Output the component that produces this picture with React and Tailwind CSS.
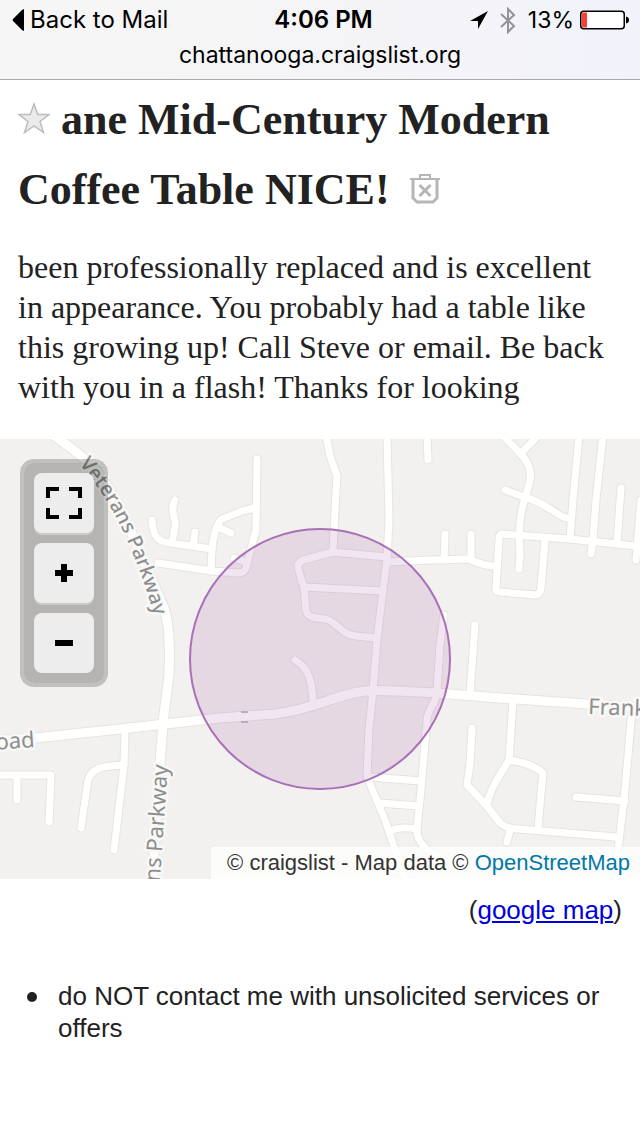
const majorRoads = [
  "M53 435 C75 450 95 465 110 490 C130 525 150 575 163 606 C170 622 170 650 169 675 L163 723 L160 765 L152 885",
  "M-5 741 L35 738 L120 729 L165 724 L220 718 L275 714 C312 709 325 700 350 694 C366 689 380 690 437 693 L500 698 L645 708",
];

const minorRoads = [
  "M152 520 C153 537 158 542 170 543 L212 549",
  "M175 500 C169 511 177 520 175 527 L172 542",
  "M195 532 L193 546",
  "M158 563 L212 571 L238 573 C244 573 246 570 247 564 L250 552 L256 530 L257 459",
  "M234 558 L246 562",
  "M255 508 C245 509 234 514 222 519 C216 523 213 540 212 549 L211 571",
  "M220 528 L231 533",
  "M326 435 L330 456 L337 476 L335 510 L333 552",
  "M387 435 L389 520 L387 560 L383 590 L377 640 L373 690 L369 730 L367 775 L370 784 L385 820 L407 885",
  "M427 435 L428 460",
  "M387 557 L333 552 L303 560 Q297 563 298 568 L304 588 L306 610 C307 617 313 618 326 619 C338 623 342 635 356 636 L376 638",
  "M304 587 L383 591",
  "M387 562 L430 560 L468 559 C477 562 482 566 495 566",
  "M295 660 C309 668 312 681 313 702",
  "M444 615 L440 645 L437 690 C437 705 428 706 427 720 L421 790 L417 829 C416 840 426 851 437 855",
  "M370 777 L421 781",
  "M379 803 L419 806",
  "M391 831 Q399 826 417 829",
  "M502 435 L520 453 C535 469 531 479 526 495 C520 512 520 524 519 538 L520 552 L519 569",
  "M537 437 L520 454",
  "M505 490 L524 497 C547 503 558 517 567 518 L571 518",
  "M579 435 L573 500 L570 538",
  "M603 435 L596 500 L593 540 L591 554",
  "M621 488 L617 543",
  "M641 500 L636 560",
  "M645 547 L570 539 L502 534 Q499 534 499 540 L496 588 Q496 592 500 592 L535 595 Q540 595 541 588 L545 540",
  "M445 534 L444 560",
  "M471 534 L471 559",
  "M475 625 L470 694",
  "M513 699 L509 760 C501 774 489 789 487 806",
  "M509 760 C521 762 532 764 543 773 L541 793 L538 830",
  "M472 728 L470 764 L467 785 L487 806 L500 823 Q507 829 518 829 L616 837",
  "M510 830 L507 842",
  "M632 710 L625 790 L618 850 L616 885",
  "M576 797 L625 801",
  "M-5 775 L51 775 L49 822",
  "M17 776 L17 800",
  "M125 731 L124 765 L114 850",
  "M124 765 C101 766 92 768 88 780 L81 828",
];

function RoadMap() {
  return (
    <svg
      className="block h-full w-full bg-[#f2f1ef]"
      viewBox="0 439 640 440"
      preserveAspectRatio="xMidYMid slice"
      role="img"
      aria-label="Street map"
      fontFamily='"Noto Sans", sans-serif'
      fontSize="22"
    >
      <defs>
        <path id="veterans" d="M79 464 C112 500 135 550 154 615 L160 640" />
      </defs>
      <g fill="none" strokeLinecap="round" strokeLinejoin="round">
        <g stroke="#e7e4de">
          {minorRoads.map((d) => <path key={d} d={d} strokeWidth="9" />)}
          {majorRoads.map((d) => <path key={d} d={d} strokeWidth="11" />)}
        </g>
        <g stroke="#fff">
          {minorRoads.map((d) => <path key={d} d={d} strokeWidth="7" />)}
          {majorRoads.map((d) => <path key={d} d={d} strokeWidth="9" />)}
        </g>
      </g>
      <path d="M241 712h7M241 722h7" stroke="#c4c0c4" strokeWidth="2" />
      <g fill="#8e8e8e" stroke="#f8f8f6" strokeWidth="5" strokeLinejoin="round" paintOrder="stroke">
        <text fontSize="20" fontWeight="500"><textPath href="#veterans">Veterans Parkway</textPath></text>
        <text transform="translate(35 747) rotate(-4)" textAnchor="end">Road</text>
        <text transform="translate(588 714) rotate(2)">Franklin</text>
        <text transform="translate(168 765) rotate(-86)" textAnchor="end">Veterans Parkway</text>
      </g>
      <circle cx="320" cy="659" r="130" fill="#800080" fillOpacity="0.1" stroke="#a870b8" strokeWidth="2" />
    </svg>
  );
}

function MapButton({ label, children }) {
  return (
    <button
      type="button"
      aria-label={label}
      className="flex size-[60px] items-center justify-center rounded-lg bg-[#ededed] shadow-[0_2px_0_#cbcbca] last:shadow-none"
    >
      <svg className="size-9" viewBox="0 0 36 36" fill="none" stroke="#000" aria-hidden="true">
        {children}
      </svg>
    </button>
  );
}

function StatusBar() {
  return (
    <header className="h-20 border-b border-[#a9a9ab] bg-linear-to-r from-[#f6f6f6] via-[#f5f5f7] to-[#f2f2fb] font-[Inter,sans-serif] text-black">
      <div className="flex h-10 items-center justify-between pr-[11px] pl-3 text-[24px] leading-10">
        <button type="button" className="flex flex-1 items-center gap-1.5 whitespace-nowrap">
          <svg className="h-[22px] w-3" viewBox="0 0 12 22" aria-hidden="true">
            <path d="M12 0v22L10 21 1 12Q0 11 1 10L10 1Z" />
          </svg>
          Back to Mail
        </button>
        <time className="pl-1.5 text-center font-semibold whitespace-nowrap">4:06 PM</time>
        <div className="flex flex-1 items-center justify-end">
          <svg className="mr-3 size-[18px]" viewBox="0 0 18 18" aria-hidden="true">
            <path d="M18 0L0 10h8v8Z" />
          </svg>
          <svg className="mr-3 h-[27px] w-4" viewBox="0 0 16 27" fill="none" stroke="#929299" strokeWidth="2" aria-hidden="true">
            <path d="M1 7l13 12-6 6V2l6 6L1 20" />
          </svg>
          <span className="mr-1.5 text-[23px]">13%</span>
          <svg className="h-5 w-[49px] shrink-0" viewBox="0 0 49 20" aria-hidden="true">
            <rect x="0.75" y="1.25" width="43.5" height="17.5" rx="3" fill="#fff" stroke="#000" strokeWidth="1.5" />
            <path d="M2 4q0-1.500 1.500-1.500H7v15H3.500Q2 17.500 2 16Z" fill="#fc3d32" />
            <path d="M46 6.500q3 .5 3 3.500t-3 3.500Z" />
          </svg>
        </div>
      </div>
      <p className="text-center text-[23px] leading-[30px]">chattanooga.craigslist.org</p>
    </header>
  );
}

export default function App() {
  return (
    <div className="min-h-screen bg-white text-[#222]">
      <StatusBar />
      <main>
        <div className="px-[18px] pt-[5px] pb-8 font-['Liberation_Serif',serif]">
          <h1 className="text-[44px] leading-[70px] font-bold">
            <button type="button" aria-label="Favorite this posting" className="mr-[11px] inline-block align-baseline">
              <svg className="block h-8 w-8" viewBox="0 0 32 32" aria-hidden="true">
                <path d="M16 2l3.700 10.500H31l-9 7L25.500 30.500 16 24l-9.500 6.500L10 19.500l-9-7h11.300Z" fill="#ebebeb" stroke="#bcbcbc" strokeWidth="1.500" />
              </svg>
            </button>
            ane Mid-Century Modern Coffee Table NICE!
            <button type="button" aria-label="Hide this posting" className="ml-5 inline-block align-baseline">
              <svg className="block h-[30px] w-[30px]" viewBox="0 0 30 30" fill="none" stroke="#b6b6b6" aria-hidden="true">
                <path d="M10 4V1h10v3" strokeWidth="2" />
                <path d="M0 5h30" strokeWidth="2" />
                <path d="M3 5v19l4 4h16l4-4V5" strokeWidth="3" />
                <path d="M9.500 11l11 11m0-11l-11 11" strokeWidth="3" />
              </svg>
            </button>
          </h1>
          <p className="mt-[22px] text-[32px] leading-10">
            been professionally replaced and is excellent in appearance. You probably had a table like this growing up! Call Steve or email. Be back with you in a flash! Thanks for looking
          </p>
        </div>

        <section aria-label="Map" className="relative h-[440px] overflow-hidden font-['Liberation_Sans',sans-serif]">
          <RoadMap />
          <div className="absolute top-5 left-5 flex flex-col gap-2.5 rounded-[14px] border-4 border-black/20 bg-black/25 bg-clip-padding p-2.5">
            <MapButton label="Full screen">
              <path d="M2 13V4h11M23 4h11v9M34 23v9H23M13 32H2v-9" strokeWidth="4" />
            </MapButton>
            <MapButton label="Zoom in">
              <path d="M9 18h18M18 9v18" strokeWidth="6" />
            </MapButton>
            <MapButton label="Zoom out">
              <path d="M9 18h18" strokeWidth="6" />
            </MapButton>
          </div>
          <p className="absolute right-0 bottom-0 bg-white/75 pr-2.5 pl-4 text-[22px] leading-8 whitespace-nowrap text-[#333]">
            © craigslist - Map data © <a href="#osm" className="text-[#0078a8]">OpenStreetMap</a>
          </p>
        </section>

        <div className="px-[18px] pb-10 font-['Liberation_Sans',sans-serif] text-[26px] leading-8">
          <p className="pt-[15px] text-right">
            (<a href="#google-map" className="text-[#0000e0] underline">google map</a>)
          </p>
          <ul className="mt-[54px] pl-[9px]">
            <li className="flex gap-[21px]">
              <span className="mt-3 size-2.5 shrink-0 rounded-full bg-[#222]" aria-hidden="true" />
              <span>do NOT contact me with unsolicited services or offers</span>
            </li>
          </ul>
        </div>
      </main>
    </div>
  );
}
